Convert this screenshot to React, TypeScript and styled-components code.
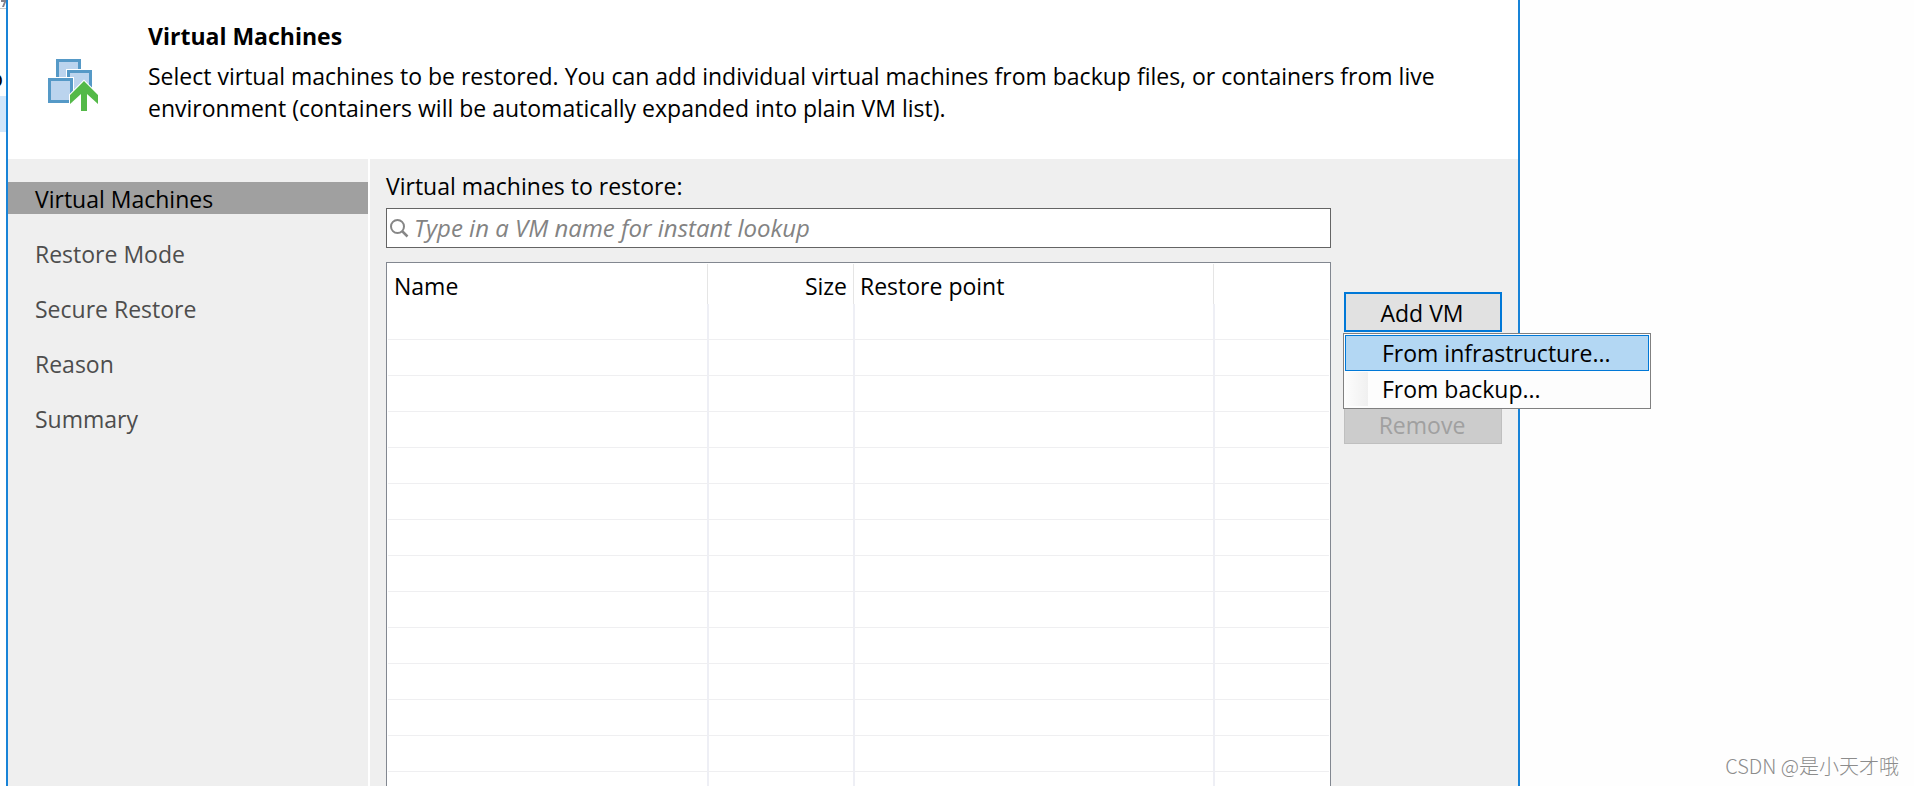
import React from "react";
import styled, { createGlobalStyle, css } from "styled-components";

const GlobalStyle = createGlobalStyle`
  *, *::before, *::after { box-sizing: border-box; }
  body {
    margin: 0;
    background: #fefefe;
    color: #000;
    font-family: "Open Sans", "Noto Sans", sans-serif;
    font-size: 23px;
    line-height: 32px;
  }
  button, input { font: inherit; }
`;

const Desktop = styled.div`
  display: grid;
  grid-template-columns: 6px minmax(0, 1fr) 394px;
  height: 100vh;
  overflow: hidden;
`;

const Behind = styled.div`
  display: flex;
  flex-direction: column;
  align-items: flex-end;
  overflow: hidden;
`;

const BehindBar = styled.div`
  width: 100%;
  height: 9px;
  border-bottom: 1px solid #c8c8c8;
  display: flex;
  justify-content: flex-end;
  align-items: flex-start;
`;

const BehindText = styled.span`
  margin-top: 53px;
  padding-right: 3px;
`;

const BehindRow = styled.div`
  width: 100%;
  height: 36px;
  margin-top: 2px;
  background: #d1e6fa;
`;

const Wizard = styled.main`
  display: flex;
  flex-direction: column;
  min-height: 0;
  background: #efefef;
  border: solid #1883d7;
  border-width: 0 2px;
`;

const Header = styled.header`
  display: flex;
  flex: none;
  gap: 50px;
  height: 159px;
  padding: 20px 40px;
  background: #fff;
`;

const HeaderIcon = styled.svg`
  flex: none;
  width: 50px;
  height: 52px;
  margin-top: 39px;
`;

const Title = styled.h1`
  margin: 0 0 8px;
  font-size: 23px;
  font-weight: 700;
  line-height: 32px;
`;

const Description = styled.p`
  max-width: 1300px;
  margin: 0;
`;

const Body = styled.div`
  display: flex;
  flex: 1;
  min-height: 0;
`;

const Steps = styled.nav`
  display: flex;
  flex: none;
  flex-direction: column;
  gap: 23px;
  width: 362px;
  padding-top: 23px;
  border-right: 2px solid #fff;
`;

const Step = styled.a<{ $active?: boolean }>`
  height: 32px;
  padding: 1px 0 0 27px;
  color: ${(p) => (p.$active ? "#000" : "#4d4d4d")};
  background: ${(p) => (p.$active ? "#a0a0a0" : "transparent")};
  text-decoration: none;
`;

const Content = styled.section`
  display: flex;
  flex: 1;
  gap: 13px;
  min-width: 0;
  padding: 11px 16px 0;
`;

const ListPane = styled.div`
  display: flex;
  flex: 1;
  flex-direction: column;
  min-width: 0;
`;

const SearchLabel = styled.label`
  margin-bottom: 6px;
`;

const SearchBox = styled.div`
  display: flex;
  flex: none;
  align-items: center;
  gap: 5px;
  height: 40px;
  margin-bottom: 14px;
  padding: 0 3px;
  background: #fff;
  border: 1px solid #646464;
`;

const SearchIcon = styled.svg`
  flex: none;
  width: 19px;
  height: 19px;
`;

const SearchInput = styled.input`
  flex: 1;
  min-width: 0;
  padding: 0;
  border: 0;
  outline: 0;
  background: none;
  font-size: 24px;
  &::placeholder {
    color: #838383;
    font-style: italic;
    opacity: 1;
  }
`;

const TableFrame = styled.div`
  flex: 1;
  min-height: 0;
  overflow: hidden;
  padding: 1px;
  background: #fff;
  border: solid #828790;
  border-width: 1px 1px 0;
`;

const Table = styled.table`
  width: 100%;
  table-layout: fixed;
  border-collapse: separate;
  border-spacing: 0;
`;

const Col = styled.col<{ $width?: number }>`
  ${(p) => p.$width && css`width: ${p.$width}px;`}
`;

const HeadCell = styled.th<{ $end?: boolean }>`
  height: 40px;
  padding: 6px 6px 2px;
  font-weight: 400;
  text-align: ${(p) => (p.$end ? "right" : "left")};
  & + & { border-left: 1px solid #e5e5e5; }
`;

const Cell = styled.td`
  height: 36px;
  padding: 0;
  border-bottom: 1px solid #efeff1;
  & + & { border-left: 2px solid #eeeff5; }
`;

const Actions = styled.div`
  display: flex;
  flex: none;
  flex-direction: column;
  gap: 72px;
  width: 158px;
  padding-top: 122px;
`;

const MenuAnchor = styled.div`
  position: relative;
`;

const ActionButton = styled.button`
  display: block;
  width: 100%;
  height: 40px;
  padding: 2px 2px 0 0;
  color: #000;
  background: #e1e1e1;
  border: 2px solid #0078d7;
  line-height: 32px;
  &:disabled {
    color: #a0a0a0;
    background: #cccccc;
    border: 1px solid #bfbfbf;
  }
`;

const Menu = styled.div`
  position: absolute;
  z-index: 1;
  top: 41px;
  left: -1px;
  width: 308px;
  padding: 1px;
  background: #fdfdfd;
  border: 1px solid #808080;
`;

const MenuItem = styled.button<{ $active?: boolean }>`
  display: block;
  width: 100%;
  height: 36px;
  padding: 1px 36px;
  color: #000;
  text-align: left;
  line-height: 32px;
  white-space: nowrap;
  border: 1px solid transparent;
  background: linear-gradient(to right, #fcfcfc, #f0f0f0) left / 22px 100% no-repeat;
  ${(p) =>
    p.$active &&
    css`
      background: #b3d7f3;
      border-color: #0078d7;
    `}
`;

const Aside = styled.aside`
  display: flex;
  align-items: flex-end;
  justify-content: flex-end;
  padding: 0 15px 6px 0;
`;

const Credit = styled.span`
  color: #8c8c8c;
  font-family: "Noto Sans CJK SC", sans-serif;
  font-size: 20px;
  font-weight: 300;
  line-height: 28px;
`;

const STEPS = ["Virtual Machines", "Restore Mode", "Secure Restore", "Reason", "Summary"];
const ROWS = Array.from({ length: 14 }, (_, i) => i);

export default function App() {
  return (
    <>
      <GlobalStyle />
      <Desktop>
        <Behind aria-hidden="true">
          <BehindBar>
            <svg width="5" height="7" viewBox="0 0 5 7">
              <path d="M0 0H5V2L3 7H1L3 2H0Z" fill="#85808a" />
            </svg>
          </BehindBar>
          <BehindText>o</BehindText>
          <BehindRow />
        </Behind>
        <Wizard>
          <Header>
            <HeaderIcon viewBox="0 0 50 52" aria-hidden="true">
              <g fill="#bbd4ee" stroke="#5599c7" strokeWidth="3">
                <rect x="9.5" y="1.5" width="22" height="22" />
                <rect x="18" y="10" width="28" height="28" fill="#fff" stroke="none" />
                <rect x="20.5" y="12.5" width="22" height="22" />
                <rect x="0" y="18" width="26" height="26" fill="#fff" stroke="none" />
                <rect x="1.5" y="20.5" width="22" height="22" />
              </g>
              <path
                d="M36 22L50 36V45L39 35V52H33V35L22 45V36Z"
                fill="#54b948"
                stroke="#fff"
                strokeWidth="2"
                paintOrder="stroke"
              />
            </HeaderIcon>
            <div>
              <Title>Virtual Machines</Title>
              <Description>
                Select virtual machines to be restored. You can add individual virtual machines from
                backup files, or containers from live environment (containers will be automatically
                expanded into plain VM list).
              </Description>
            </div>
          </Header>
          <Body>
            <Steps aria-label="Wizard steps">
              {STEPS.map((name, i) => (
                <Step key={name} href="#" $active={i === 0} aria-current={i === 0 ? "step" : undefined}>
                  {name}
                </Step>
              ))}
            </Steps>
            <Content>
              <ListPane>
                <SearchLabel htmlFor="vm-search">Virtual machines to restore:</SearchLabel>
                <SearchBox>
                  <SearchIcon viewBox="0 0 19 19" fill="none" stroke="#868686" aria-hidden="true">
                    <circle cx="7.5" cy="7.5" r="6.5" strokeWidth="2" />
                    <path d="M12 12L17.5 17.5" strokeWidth="2.5" />
                  </SearchIcon>
                  <SearchInput id="vm-search" placeholder="Type in a VM name for instant lookup" />
                </SearchBox>
                <TableFrame>
                  <Table>
                    <colgroup>
                      <Col $width={319} />
                      <Col $width={146} />
                      <Col $width={360} />
                      <Col />
                    </colgroup>
                    <thead>
                      <tr>
                        <HeadCell>Name</HeadCell>
                        <HeadCell $end>Size</HeadCell>
                        <HeadCell>Restore point</HeadCell>
                        <HeadCell />
                      </tr>
                    </thead>
                    <tbody>
                      {ROWS.map((r) => (
                        <tr key={r}>
                          <Cell />
                          <Cell />
                          <Cell />
                          <Cell />
                        </tr>
                      ))}
                    </tbody>
                  </Table>
                </TableFrame>
              </ListPane>
              <Actions>
                <MenuAnchor>
                  <ActionButton type="button" aria-haspopup="menu" aria-expanded="true">
                    Add VM
                  </ActionButton>
                  <Menu role="menu">
                    <MenuItem type="button" role="menuitem" $active>
                      From infrastructure...
                    </MenuItem>
                    <MenuItem type="button" role="menuitem">
                      From backup...
                    </MenuItem>
                  </Menu>
                </MenuAnchor>
                <ActionButton type="button" disabled>
                  Remove
                </ActionButton>
              </Actions>
            </Content>
          </Body>
        </Wizard>
        <Aside>
          <Credit>CSDN @是小天才哦</Credit>
        </Aside>
      </Desktop>
    </>
  );
}
